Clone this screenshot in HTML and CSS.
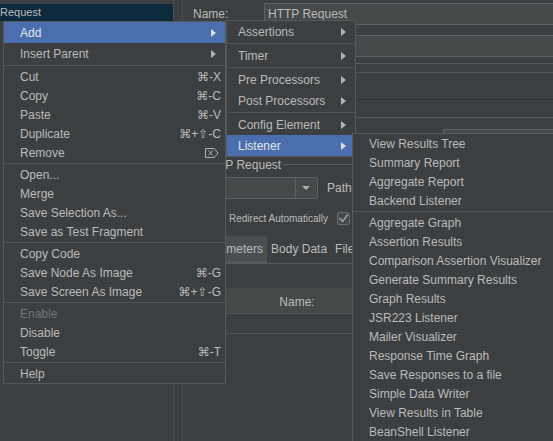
FILE: index.html
```html
<!DOCTYPE html>
<html>
<head>
<meta charset="utf-8">
<link rel="stylesheet" href="styles.css">
</head>
<body>
<div class="app">
  <div class="tree">
    <div class="tree-row selected"><span>Request</span></div>
  </div>
  <div class="splitter"></div>
  <div class="editor">
    <div class="form-row"><div class="lbl">Name:</div><div class="field">HTTP Request</div></div>
    <div class="form-row comments"><div class="lbl"></div><div class="field"></div></div>
    <div class="band"></div>
    <div class="websrv"></div>
    <div class="form-row port-row"><div class="field port"></div></div>
    <div class="titled"><div class="tline short"></div><div class="ttext">HTTP Request</div><div class="tline"></div></div>
    <div class="combo-row">
      <div class="combo"><div class="combo-text"></div><div class="combo-btn"><span class="down"></span></div></div>
      <div class="path-lbl">Path</div>
      <div class="field path"></div>
    </div>
    <div class="check-row">
      <span class="cb"><svg width="13" height="13" viewBox="0 0 13 13"><path d="M2.3 6 L5.6 9.4 L10.8 2.4" fill="none" stroke="#a9abac" stroke-width="1.4"/></svg></span>
      <span class="cb-lbl">Redirect Automatically</span>
      <span class="cb second"><svg width="13" height="13" viewBox="0 0 13 13"><path d="M2.3 6 L5.6 9.4 L10.8 2.4" fill="none" stroke="#a9abac" stroke-width="1.4"/></svg></span>
    </div>
    <div class="tabs">
      <div class="tab selected">Parameters</div>
      <div class="tab">Body Data</div>
      <div class="tab">File</div>
    </div>
    <div class="table-head"><div class="col name-col">Name:</div></div>
    <div class="table-row"></div>
  </div>
</div>

<div class="menu main">
  <div class="mi has-sub active"><span>Add</span><span class="arrow"></span></div>
  <div class="mi has-sub"><span>Insert Parent</span><span class="arrow"></span></div>
  <div class="sep"></div>
  <div class="mi"><span>Cut</span><span class="sc">⌘-X</span></div>
  <div class="mi"><span>Copy</span><span class="sc">⌘-C</span></div>
  <div class="mi"><span>Paste</span><span class="sc">⌘-V</span></div>
  <div class="mi"><span>Duplicate</span><span class="sc">⌘+⇧-C</span></div>
  <div class="mi"><span>Remove</span><svg class="del" width="14" height="10" viewBox="0 0 14 10"><path d="M0.5 0.5 H9.2 L13 5 L9.2 9.5 H0.5 Z" fill="none" stroke="#b4b4b4" stroke-width="1"/><path d="M3.6 2.6 L7.6 7.4 M7.6 2.6 L3.6 7.4" stroke="#b4b4b4" stroke-width="1"/></svg></div>
  <div class="sep"></div>
  <div class="mi"><span>Open...</span></div>
  <div class="mi"><span>Merge</span></div>
  <div class="mi"><span>Save Selection As...</span></div>
  <div class="mi"><span>Save as Test Fragment</span></div>
  <div class="sep"></div>
  <div class="mi"><span>Copy Code</span></div>
  <div class="mi"><span>Save Node As Image</span><span class="sc">⌘-G</span></div>
  <div class="mi"><span>Save Screen As Image</span><span class="sc">⌘+⇧-G</span></div>
  <div class="sep"></div>
  <div class="mi disabled"><span>Enable</span></div>
  <div class="mi"><span>Disable</span></div>
  <div class="mi"><span>Toggle</span><span class="sc">⌘-T</span></div>
  <div class="sep"></div>
  <div class="mi"><span>Help</span></div>
</div>

<div class="menu sub1">
  <div class="mi has-sub"><span>Assertions</span><span class="arrow"></span></div>
  <div class="sep"></div>
  <div class="mi has-sub"><span>Timer</span><span class="arrow"></span></div>
  <div class="sep"></div>
  <div class="mi has-sub"><span>Pre Processors</span><span class="arrow"></span></div>
  <div class="mi has-sub"><span>Post Processors</span><span class="arrow"></span></div>
  <div class="sep"></div>
  <div class="mi has-sub"><span>Config Element</span><span class="arrow"></span></div>
  <div class="mi has-sub active"><span>Listener</span><span class="arrow"></span></div>
</div>

<div class="menu sub2">
  <div class="mi"><span>View Results Tree</span></div>
  <div class="mi"><span>Summary Report</span></div>
  <div class="mi"><span>Aggregate Report</span></div>
  <div class="mi"><span>Backend Listener</span></div>
  <div class="sep"></div>
  <div class="mi"><span>Aggregate Graph</span></div>
  <div class="mi"><span>Assertion Results</span></div>
  <div class="mi"><span>Comparison Assertion Visualizer</span></div>
  <div class="mi"><span>Generate Summary Results</span></div>
  <div class="mi"><span>Graph Results</span></div>
  <div class="mi"><span>JSR223 Listener</span></div>
  <div class="mi"><span>Mailer Visualizer</span></div>
  <div class="mi"><span>Response Time Graph</span></div>
  <div class="mi"><span>Save Responses to a file</span></div>
  <div class="mi"><span>Simple Data Writer</span></div>
  <div class="mi"><span>View Results in Table</span></div>
  <div class="mi"><span>BeanShell Listener</span></div>
</div>
</body>
</html>
```
FILE: styles.css
```css
* { box-sizing: border-box; }
html, body { margin: 0; padding: 0; }
body {
  width: 553px;
  height: 441px;
  overflow: hidden;
  position: relative;
  background: #3c3f41;
  color: #bbbbbb;
  font-family: "Liberation Sans", "DejaVu Sans", sans-serif;
  font-size: 12px;
}

.app { display: flex; height: 441px; }

.tree {
  width: 174px;
  flex: none;
  border-right: 1px solid #4b4e50;
  padding-top: 4px;
  overflow: hidden;
}
.tree-row { height: 17px; line-height: 17px; font-size: 11px; white-space: nowrap; overflow: hidden; }
.tree-row.selected { background: #0d293e; }
.tree-row span { display: inline-block; margin-left: 0; }

.splitter { width: 8px; flex: none; }

.editor {
  flex: 1;
  min-width: 0;
  border-left: 1px solid #4b4e50;
  padding-top: 3px;
  overflow: hidden;
}

.form-row { display: flex; height: 22px; }
.form-row.comments { margin-top: 10px; }
.lbl { width: 81px; flex: none; padding-left: 10px; line-height: 22px; }
.field {
  flex: 1;
  margin-right: -10px;
  background: #45494a;
  border: 1px solid #5e6264;
  padding-left: 3px;
  line-height: 20px;
  white-space: nowrap;
}

.band {
  margin-top: 6px;
  height: 10px;
  border-top: 1px solid #5a5d5f;
  border-bottom: 1px solid #54575a;
}
.websrv {
  margin-top: 26px;
  height: 19px;
  border-top: 1px solid #2f3234;
  border-bottom: 1px solid #5a5d5f;
}
.port-row { margin-top: 11px; }
.field.port { margin-left: 260px; }

.titled {
  margin-top: 7px;
  height: 14px;
  display: flex;
  align-items: center;
  padding-left: 7px;
}
.tline { flex: 1; height: 1px; background: #5a5d5f; margin-top: -2px; margin-right: -10px; }
.tline.short { flex: none; width: 10px; margin-right: 0; }
.ttext { margin: 0 3px 0 2px; line-height: 14px; white-space: nowrap; }

.combo-row { margin-top: 5px; height: 22px; display: flex; }
.combo {
  margin-left: 10px;
  width: 125px;
  flex: none;
  display: flex;
  background: #45494a;
  border: 1px solid #5e6264;
  border-radius: 2px;
}
.combo-text { flex: 1; }
.combo-btn {
  width: 22px;
  border-left: 1px solid #5e6264;
  display: flex;
  align-items: center;
  justify-content: center;
}
.down {
  width: 0; height: 0;
  border-left: 4px solid transparent;
  border-right: 4px solid transparent;
  border-top: 4px solid #b0b0b0;
  margin-left: -2px;
}
.path-lbl { margin-left: 9px; line-height: 22px; }
.field.path { margin-left: 6px; }

.check-row {
  margin-top: 13px;
  height: 13px;
  display: flex;
  align-items: center;
  white-space: nowrap;
}
.cb {
  width: 13px; height: 13px;
  flex: none;
  margin-left: 28px;
  border: 1px solid #6a6d6f;
  border-radius: 2px;
  background: #43494a;
  display: flex;
}
.cb svg { margin: -1px; }
.cb.second { margin-left: 9px; }
.cb-lbl { font-size: 10px; margin-left: 5px; }

.tabs {
  margin-top: 11px;
  height: 28px;
  display: flex;
  border-bottom: 1px solid #55585a;
  padding-left: 14px;
}
.tab { padding: 0 4px; line-height: 27px; white-space: nowrap; }
.tab.selected { background: #4a4e50; box-shadow: inset 0 -2px 0 #56595b; }

.table-head {
  margin-top: 24px;
  height: 26px;
  display: flex;
  background: #45494a;
  border-bottom: 1px solid #535658;
}
.col { line-height: 25px; padding-top: 2px; text-align: center; width: 228px; flex: none; }
.table-row { height: 20px; border-bottom: 1px solid #535658; }

/* popup menus */
.menu {
  position: absolute;
  background: #3c3f41;
  border: 1px solid #56595b;
}
.main { left: 3px; top: 21px; width: 223px; }
.sub1 { left: 226px; top: 20px; width: 130px; }
.sub2 { left: 352px; top: 133px; width: 240px; }

.mi {
  display: flex;
  align-items: center;
  justify-content: space-between;
  height: 19px;
  padding: 0 4px 0 16px;
  white-space: nowrap;
}
.mi.has-sub { height: 21px; padding-right: 9px; }
.sub1 .mi { padding-left: 11px; }
.mi.active { background: #4b6eaf; color: #e6e6e6; }
.mi.disabled { color: #737577; }
.sep { height: 1px; margin: 1px 0; background: #515456; }
.arrow {
  width: 0; height: 0;
  border-left: 5px solid #b4b4b4;
  border-top: 4px solid transparent;
  border-bottom: 4px solid transparent;
}
.mi.active .arrow { border-left-color: #dcdcdc; }
.sc { font-size: 12px; }
.del { margin-right: 2px; }
```
